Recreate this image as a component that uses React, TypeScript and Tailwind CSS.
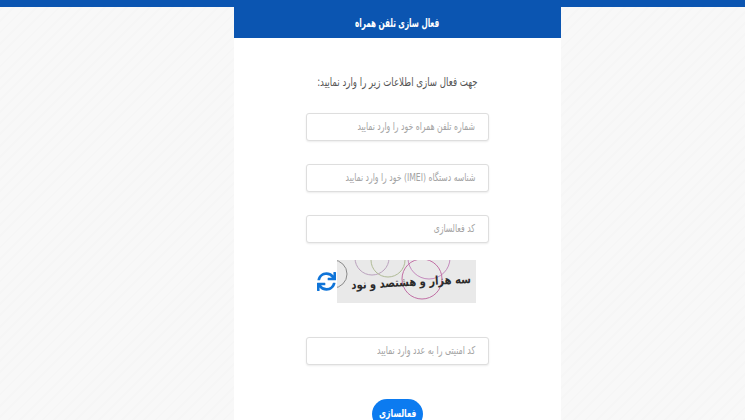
import { FaSync } from "react-icons/fa";

function Field({ text, className, scale }: { text: string; className: string; scale: string }) {
  return (
    <div className={`w-[183px] h-[28px] bg-white border border-[#dedede] rounded-[3px] shadow-[0_1px_2px_rgba(0,0,0,0.08)] flex items-center pr-[13px] text-[11px] text-[#a3a3a3] whitespace-nowrap shrink-0 ${className}`}>
      <span className={`inline-block origin-right ${scale}`}>{text}</span>
    </div>
  );
}

export default function App() {
  return (
    <div className="h-[420px] w-[745px] overflow-hidden flex flex-col font-['DejaVu_Sans',sans-serif] bg-[#f7f7f7] bg-[repeating-linear-gradient(135deg,#f8f8f8_0px,#f8f8f8_6px,#f6f6f6_6px,#f6f6f6_8px)]">
      <div className="h-[7px] bg-[#0b55b1] shrink-0" />
      <div dir="rtl" className="w-[327px] ml-[234px] flex-1 bg-white flex flex-col items-center">
        <div className="w-full h-[31px] bg-[#0b55b1] flex items-center justify-center text-white text-[12px] font-bold shrink-0">
          <span className="inline-block scale-x-[0.6]">فعال سازی تلفن همراه</span>
        </div>
        <div className="mt-[36px] h-[16px] flex items-center text-[12px] text-[#555555] whitespace-nowrap">
          <span className="inline-block scale-x-[0.72]">جهت فعال سازی اطلاعات زیر را وارد نمایید:</span>
        </div>
        <Field className="mt-[23px]" scale="scale-x-[0.7]" text="شماره تلفن همراه خود را وارد نمایید" />
        <Field className="mt-[23px]" scale="scale-x-[0.7]" text="شناسه دستگاه (IMEI) خود را وارد نمایید" />
        <Field className="mt-[23px]" scale="scale-x-[0.7]" text="کد فعالسازی" />
        <div dir="ltr" className="mt-[17px] w-[183px] h-[43px] flex items-center pl-[11px] gap-[1px] shrink-0">
          <FaSync className="w-[19px] h-[21px] text-[#0f74d8] shrink-0" />
          <div className="relative w-[139px] h-[43px] bg-[#e9e9e9] overflow-hidden shrink-0">
            <svg viewBox="0 0 139 43" className="absolute inset-0 w-full h-full" fill="none">
              <circle cx="-4" cy="14" r="14" stroke="#8a8a8a" strokeWidth="1" />
              <circle cx="35" cy="-2" r="17" stroke="#b49ab8" strokeWidth="0.9" />
              <circle cx="51" cy="0" r="17" stroke="#a9b58c" strokeWidth="0.9" />
              <circle cx="92" cy="-2" r="21" stroke="#c080b8" strokeWidth="0.9" />
              <circle cx="85" cy="19" r="20" stroke="#c16fa5" strokeWidth="1" />
            </svg>
            <div dir="rtl" className="absolute left-[9px] right-0 top-[13px] flex justify-center text-[12px] font-bold text-[#2b2b2b] whitespace-nowrap">
              <span className="inline-block scale-x-[0.83] rotate-[-3deg]">سه هزار و هشتصد و نود</span>
            </div>
          </div>
        </div>
        <Field className="mt-[34px]" scale="scale-x-[0.71]" text="کد امنیتی را به عدد وارد نمایید" />
        <div className="mt-[34px] w-[51px] h-[30px] rounded-full bg-[#0c7bf0] flex items-center justify-center text-white text-[11px] font-bold shrink-0 whitespace-nowrap">
          <span className="inline-block scale-x-[0.7]">فعالسازی</span>
        </div>
      </div>
    </div>
  );
}
